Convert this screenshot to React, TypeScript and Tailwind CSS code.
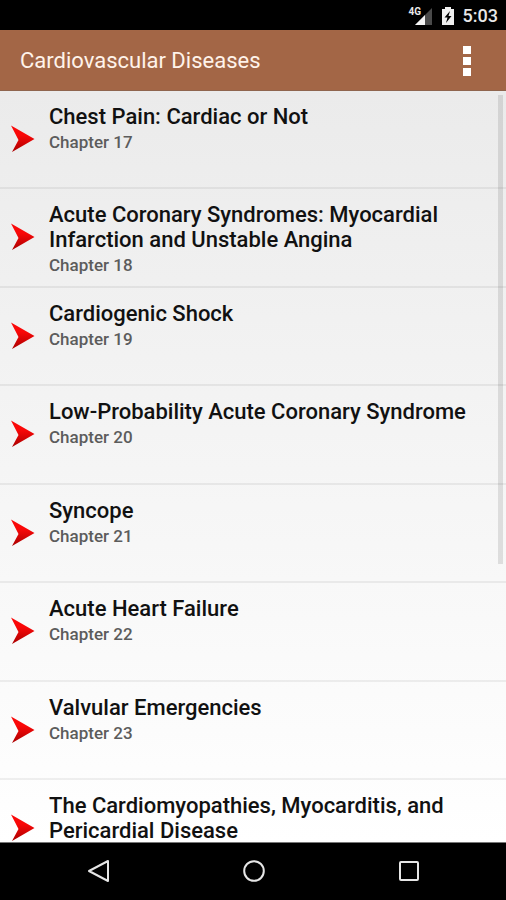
type Chapter = { title: string; number?: number };

const chapters: Chapter[] = [
  { title: "Chest Pain: Cardiac or Not", number: 17 },
  { title: "Acute Coronary Syndromes: Myocardial Infarction and Unstable Angina", number: 18 },
  { title: "Cardiogenic Shock", number: 19 },
  { title: "Low-Probability Acute Coronary Syndrome", number: 20 },
  { title: "Syncope", number: 21 },
  { title: "Acute Heart Failure", number: 22 },
  { title: "Valvular Emergencies", number: 23 },
  { title: "The Cardiomyopathies, Myocarditis, and Pericardial Disease" },
];

function StatusBar() {
  return (
    <div className="flex h-[30px] shrink-0 items-center justify-end bg-black pt-[2px] pr-2 text-[#e8e8e8]">
      <span className="relative mr-2 block h-5 w-6">
        <svg viewBox="0 0 24 20" className="h-5 w-6" aria-hidden="true">
          <path d="M23 2v17H6z" fill="#4a4a4a" />
          <path d="M16 9v10H6z" fill="#f4f4f4" />
        </svg>
        <span className="absolute top-0 left-0 text-[10px] leading-[11px] font-bold">4G</span>
      </span>
      <svg viewBox="0 0 14 20" className="mr-2 h-5 w-[14px]" aria-hidden="true">
        <path d="M1 3h3V1h6v2h3v16H1z" fill="#f0f0f0" />
        <path d="M9 5L3.5 11.5h3L5 17l5.500-7h-3z" fill="#000" />
      </svg>
      <span className="text-lg leading-5 font-medium">5:03</span>
    </div>
  );
}

function Header() {
  return (
    <header className="flex h-[61px] shrink-0 items-center justify-between border-b border-[#8f654e] bg-[#a36646] pt-[2px] pr-[23px] pl-5">
      <h1 className="text-[22px] leading-7 text-[#fff3ea]">Cardiovascular Diseases</h1>
      <button type="button" aria-label="More options" className="flex w-8 flex-col items-center gap-[3px]">
        <span className="size-2 bg-white" />
        <span className="size-2 bg-white" />
        <span className="size-2 bg-white" />
      </button>
    </header>
  );
}

function Arrow() {
  return (
    <svg viewBox="0 0 24 28" className="h-7 w-6 shrink-0" aria-hidden="true">
      <defs>
        <linearGradient id="arrow" x1="0" y1="0" x2="0" y2="1">
          <stop offset="0.35" stopColor="#fa0808" />
          <stop offset="0.6" stopColor="#dc0505" />
          <stop offset="1" stopColor="#a80000" />
        </linearGradient>
      </defs>
      <path d="M0 0.5L23.5 14L1 27L7.5 15z" fill="url(#arrow)" />
    </svg>
  );
}

function ChapterRow({ title, number }: Chapter) {
  return (
    <li className="border-b-2 border-black/6 odd:min-h-[98px] even:min-h-[99px]">
      <button type="button" className="flex w-full items-start gap-[14px] pt-[13px] pr-4 pl-[11px] text-left">
        <span className="flex pt-[21px]">
          <Arrow />
        </span>
        <span className="flex flex-col gap-1">
          <span className="text-[22px] leading-[25px] font-medium text-[#111]">{title}</span>
          {number && (
            <span className="text-[17px] leading-[19px] font-medium text-[#5c5c5c]">Chapter {number}</span>
          )}
        </span>
      </button>
    </li>
  );
}

function NavBar() {
  return (
    <nav className="flex h-[58px] shrink-0 items-center justify-center gap-[131px] border-t border-[#777] bg-black pb-[2px] pl-[2px]">
      <button type="button" aria-label="Back">
        <svg viewBox="0 0 24 24" className="size-6" fill="none" stroke="#e6e6e6" strokeWidth="2" strokeLinejoin="round">
          <path d="M21 2v20L2 12z" />
        </svg>
      </button>
      <button type="button" aria-label="Home">
        <svg viewBox="0 0 24 24" className="size-6" fill="none" stroke="#e6e6e6" strokeWidth="2">
          <circle cx="12" cy="12" r="9.8" />
        </svg>
      </button>
      <button type="button" aria-label="Recent apps">
        <svg viewBox="0 0 24 24" className="size-6" fill="none" stroke="#e6e6e6" strokeWidth="2">
          <rect x="3" y="3" width="18" height="18" rx="1" />
        </svg>
      </button>
    </nav>
  );
}

export default function App() {
  return (
    <div className="flex h-screen flex-col overflow-hidden font-[Roboto,sans-serif]">
      <StatusBar />
      <Header />
      <main className="relative min-h-0 flex-1 overflow-hidden bg-linear-to-b from-[#ebebeb] to-white">
        <ul>
          {chapters.map((chapter) => (
            <ChapterRow key={chapter.title} {...chapter} />
          ))}
        </ul>
        <div className="absolute top-1 right-[3px] h-[62.500%] w-[5px] bg-black/10" />
      </main>
      <NavBar />
    </div>
  );
}
